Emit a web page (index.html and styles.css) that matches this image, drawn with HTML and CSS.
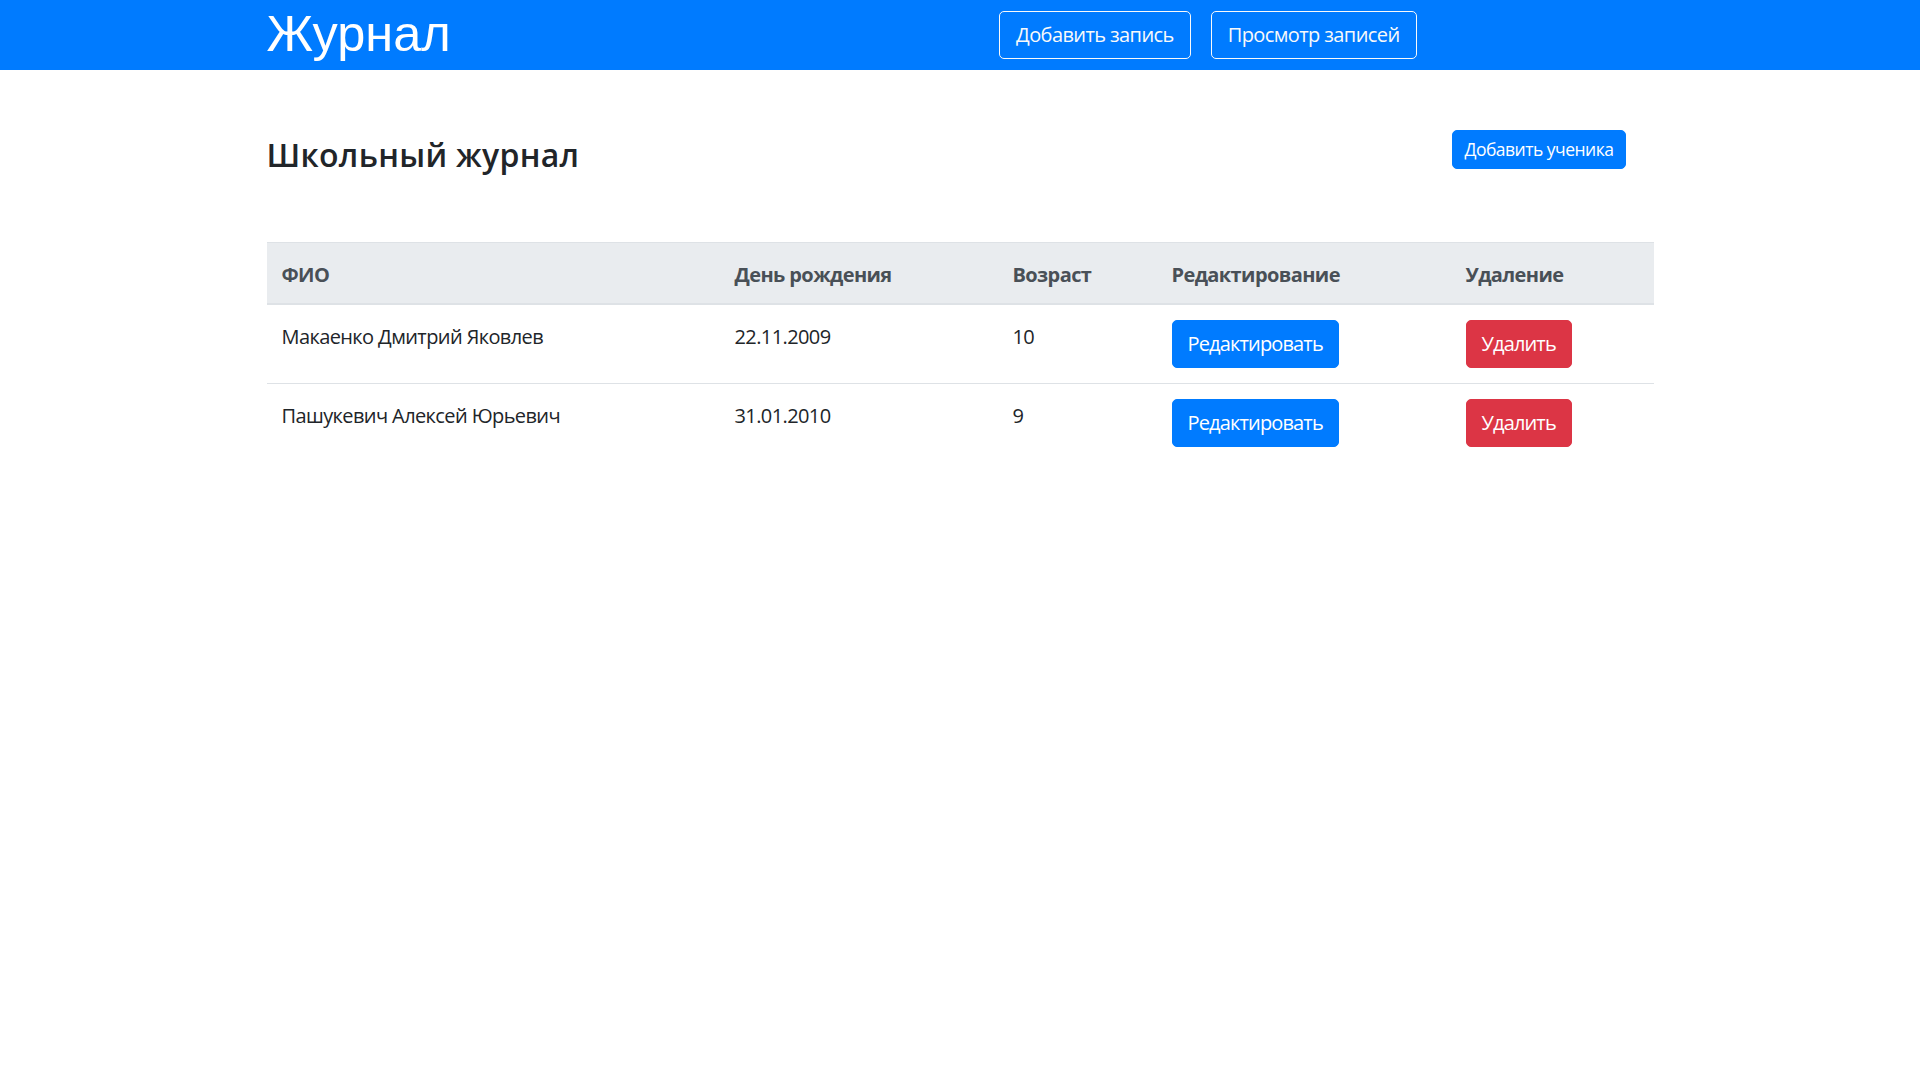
FILE: index.html
```html
<!DOCTYPE html>
<html lang="ru">
<head>
<meta charset="utf-8">
<title>Журнал</title>
<link rel="stylesheet" href="styles.css">
</head>
<body>
<nav class="navbar">
  <div class="container nav-inner">
    <a class="brand" href="#">Журнал</a>
    <div class="nav-actions">
      <a class="btn btn-outline" href="#">Добавить запись</a>
      <a class="btn btn-outline" href="#">Просмотр записей</a>
    </div>
  </div>
</nav>
<main class="container">
  <div class="page-head">
    <h2 class="title">Школьный журнал</h2>
    <a class="btn btn-sm btn-primary" href="#">Добавить ученика</a>
  </div>
  <table class="table">
    <thead>
      <tr>
        <th class="col-name">ФИО</th>
        <th class="col-date">День рождения</th>
        <th class="col-age">Возраст</th>
        <th class="col-edit">Редактирование</th>
        <th class="col-del">Удаление</th>
      </tr>
    </thead>
    <tbody>
      <tr>
        <td>Макаенко Дмитрий Яковлев</td>
        <td>22.11.2009</td>
        <td>10</td>
        <td><a class="btn btn-primary" href="#">Редактировать</a></td>
        <td><a class="btn btn-danger" href="#">Удалить</a></td>
      </tr>
      <tr>
        <td>Пашукевич Алексей Юрьевич</td>
        <td>31.01.2010</td>
        <td>9</td>
        <td><a class="btn btn-primary" href="#">Редактировать</a></td>
        <td><a class="btn btn-danger" href="#">Удалить</a></td>
      </tr>
    </tbody>
  </table>
</main>
</body>
</html>
```
FILE: styles.css
```css
* { box-sizing: border-box; }
body {
  margin: 0;
  font-family: "Open Sans", "Noto Sans", sans-serif;
  font-size: 20px;
  line-height: 30px;
  color: #212529;
  background: #fff;
}
.container {
  width: 1387px;
  margin: 0 auto;
}
.navbar {
  background: #007bff;
  height: 70px;
}
.nav-inner {
  display: flex;
  align-items: center;
  height: 70px;
}
.brand {
  font-family: "Liberation Sans", Arial, sans-serif;
  font-size: 50.5px;
  line-height: 60px;
  color: #fff;
  text-decoration: none;
  margin-top: -2px;
}
.nav-actions {
  display: flex;
  gap: 20px;
  margin-left: auto;
  margin-right: 237px;
}
.btn {
  display: inline-block;
  font-family: "Open Sans", "Noto Sans", sans-serif;
  font-size: 20px;
  line-height: 30px;
  padding: 8px 16px;
  border: 1px solid transparent;
  border-radius: 5px;
  text-decoration: none;
  white-space: nowrap;
  letter-spacing: -0.6px;
}
.btn-outline {
  color: #f8f9fa;
  border-color: #f8f9fa;
}
.btn-primary {
  color: #fff;
  background: #007bff;
  border-color: #007bff;
}
.btn-danger {
  color: #fff;
  background: #dc3545;
  border-color: #dc3545;
}
.table .btn {
  letter-spacing: -0.85px;
  padding: 8px 15px;
  margin: -2px 0 2px;
  vertical-align: top;
}
.btn-sm {
  font-size: 17.5px;
  line-height: 27px;
  padding: 5px 11px;
  letter-spacing: -0.5px;
}
.page-head {
  display: flex;
  justify-content: space-between;
  align-items: flex-start;
  padding-top: 60px;
  padding-right: 28px;
}
.title {
  margin: 6px 0 0 0;
  font-family: "Open Sans", "Noto Sans", sans-serif;
  font-size: 32px;
  line-height: 38px;
  font-weight: 600;
  letter-spacing: 0.3px;
  color: #212529;
}
.table {
  width: 100%;
  margin-top: 68px;
  border-collapse: collapse;
  table-layout: fixed;
}
.table th,
.table td {
  padding: 17px 15px 13px;
  text-align: left;
  vertical-align: top;
  border-top: 1px solid #dee2e6;
  letter-spacing: -0.6px;
}
.table thead th {
  background: #e9ecef;
  color: #495057;
  font-weight: 700;
  border-bottom: 2px solid #dee2e6;
}
.col-name { width: 453px; }
.col-date { width: 278px; }
.col-age { width: 159px; }
.col-edit { width: 294px; }
.col-del { width: 203px; }
```
